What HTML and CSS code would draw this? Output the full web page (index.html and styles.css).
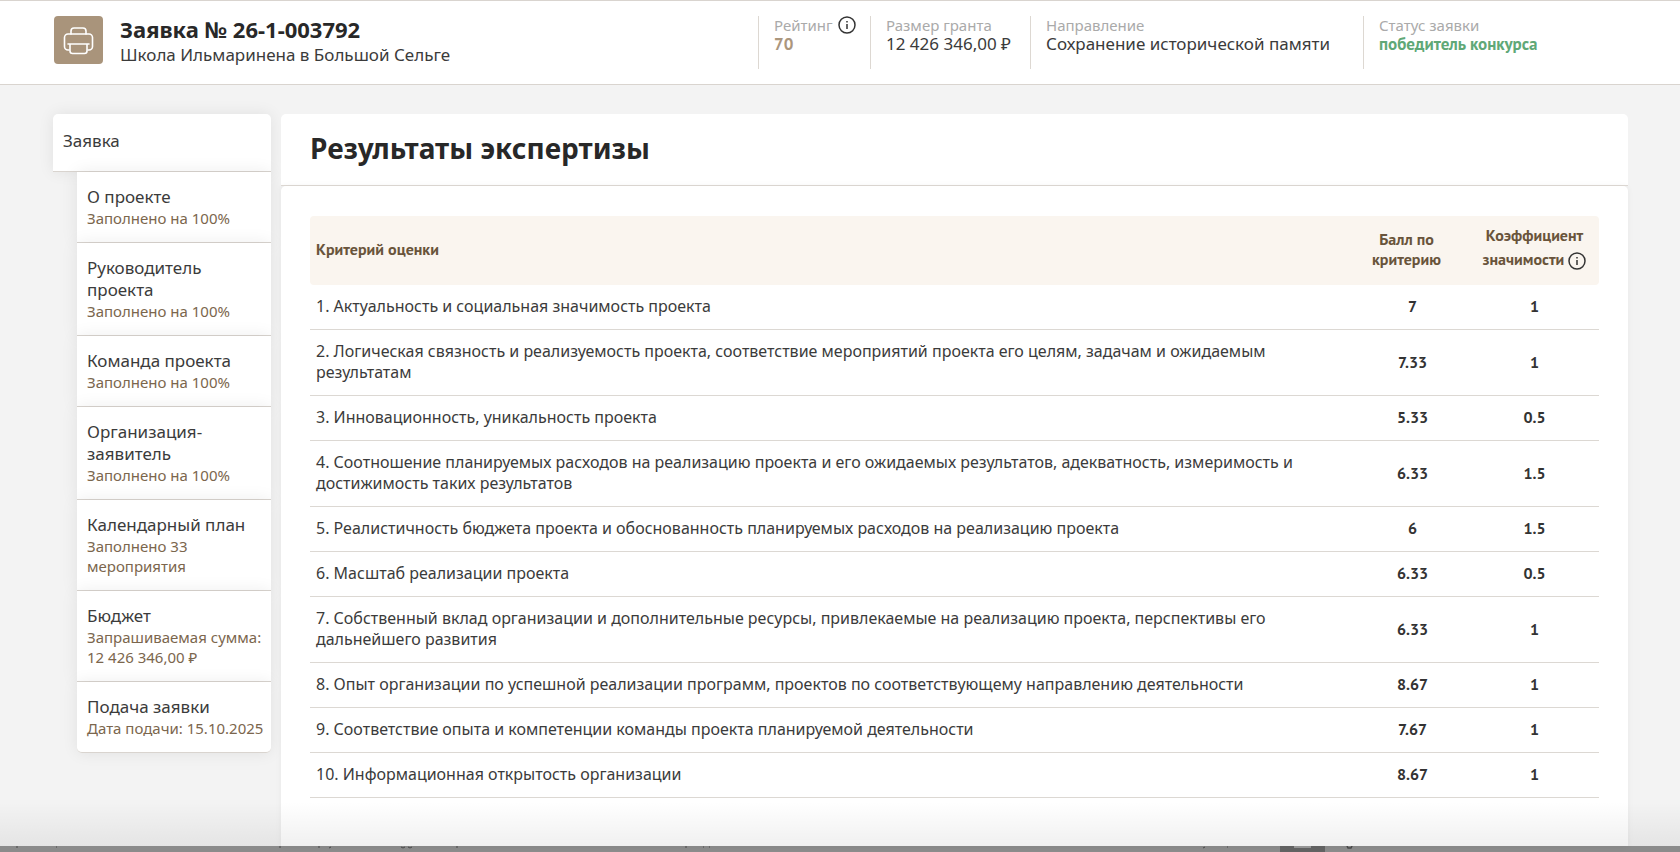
FILE: index.html
```html
<!DOCTYPE html>
<html lang="ru">
<head>
  <meta charset="UTF-8">
  <meta name="viewport" content="width=device-width, initial-scale=1.0">
  <title>Заявка № 26-1-003792</title>
  <link rel="stylesheet" href="styles.css">
</head>
<body>
  <!-- Шапка заявки -->
  <header class="header">
    <button class="print-button" type="button" aria-label="Печать">
      <svg width="49" height="49" viewBox="0 0 49 49" fill="none" stroke="#fff" stroke-width="1.6" stroke-linejoin="round" stroke-linecap="round">
        <path d="M17 18v-3a3 3 0 0 1 3-3h9a3 3 0 0 1 3 3v3"/>
        <path d="M15 34h-1a3.500 3.500 0 0 1-3.500-3.500v-9a3.500 3.500 0 0 1 3.500-3.500h21a3.500 3.500 0 0 1 3.500 3.500v9a3.500 3.500 0 0 1-3.500 3.500h-1"/>
        <path d="M14 28h21M16 28v7a2.500 2.500 0 0 0 2.500 2.500h12a2.500 2.500 0 0 0 2.500-2.500v-7"/>
      </svg>
    </button>
    <div class="header-title">
      <div class="header-number">Заявка № 26-1-003792</div>
      <div class="header-name">Школа Ильмаринена в Большой Сельге</div>
    </div>
    <dl class="stats">
      <div class="stat stat-rating">
        <dt>Рейтинг
          <svg class="info" viewBox="0 0 18 18"><circle cx="9" cy="9" r="8"/><path d="M9 5v1.600M9 8v5"/></svg>
        </dt>
        <dd class="rating">70</dd>
      </div>
      <div class="stat stat-grant">
        <dt>Размер гранта</dt>
        <dd>12 426 346,00 ₽</dd>
      </div>
      <div class="stat stat-direction">
        <dt>Направление</dt>
        <dd>Сохранение исторической памяти</dd>
      </div>
      <div class="stat stat-status">
        <dt>Статус заявки</dt>
        <dd class="status">победитель конкурса</dd>
      </div>
    </dl>
  </header>

  <div class="page">
    <!-- Меню разделов -->
    <nav class="menu">
      <a class="menu-main" href="#">Заявка</a>
      <a class="menu-item" href="#">О проекте<span>Заполнено на 100%</span></a>
      <a class="menu-item" href="#">Руководитель проекта<span>Заполнено на 100%</span></a>
      <a class="menu-item" href="#">Команда проекта<span>Заполнено на 100%</span></a>
      <a class="menu-item" href="#">Организация-заявитель<span>Заполнено на 100%</span></a>
      <a class="menu-item" href="#">Календарный план<span>Заполнено 33 мероприятия</span></a>
      <a class="menu-item" href="#">Бюджет<span>Запрашиваемая сумма:<br>12 426 346,00 ₽</span></a>
      <a class="menu-item" href="#">Подача заявки<span>Дата подачи: 15.10.2025</span></a>
    </nav>

    <!-- Результаты -->
    <main class="content">
      <h1>Результаты экспертизы</h1>
      <div class="panel">
        <table class="results">
          <thead>
            <tr>
              <th>Критерий оценки</th>
              <th class="score">Балл по критерию</th>
              <th class="weight">Коэффициент <span>значимости
                <svg class="info" viewBox="0 0 18 18"><circle cx="9" cy="9" r="8"/><path d="M9 5v1.600M9 8v5"/></svg></span>
              </th>
            </tr>
          </thead>
          <tbody>
            <tr><td>1. Актуальность и социальная значимость проекта</td><td>7</td><td>1</td></tr>
            <tr><td>2. Логическая связность и реализуемость проекта, соответствие мероприятий проекта его целям, задачам и ожидаемым результатам</td><td>7.33</td><td>1</td></tr>
            <tr><td>3. Инновационность, уникальность проекта</td><td>5.33</td><td>0.5</td></tr>
            <tr><td>4. Соотношение планируемых расходов на реализацию проекта и его ожидаемых результатов, адекватность, измеримость и достижимость таких результатов</td><td>6.33</td><td>1.5</td></tr>
            <tr><td>5. Реалистичность бюджета проекта и обоснованность планируемых расходов на реализацию проекта</td><td>6</td><td>1.5</td></tr>
            <tr><td>6. Масштаб реализации проекта</td><td>6.33</td><td>0.5</td></tr>
            <tr><td>7. Собственный вклад организации и дополнительные ресурсы, привлекаемые на реализацию проекта, перспективы его дальнейшего развития</td><td>6.33</td><td>1</td></tr>
            <tr><td>8. Опыт организации по успешной реализации программ, проектов по соответствующему направлению деятельности</td><td>8.67</td><td>1</td></tr>
            <tr><td>9. Соответствие опыта и компетенции команды проекта планируемой деятельности</td><td>7.67</td><td>1</td></tr>
            <tr><td>10. Информационная открытость организации</td><td>8.67</td><td>1</td></tr>
          </tbody>
        </table>
      </div>
    </main>
  </div>

  <!-- Край затемнённого фона под окном -->
  <div class="backdrop">
    <svg width="100%" height="6" viewBox="0 0 1680 6" preserveAspectRatio="none">
      <path fill="#636363" d="M1280 0h45v6h-45z"/>
      <path fill="#999" d="M1294 0h17v2h-17z"/>
      <path fill="none" stroke="#4a4a4a" d="M16 1h2M56 1h1M279 1h2M318 1h2M329 2l2-1M401 1l2 1 2-1M408 1l2 1 2-1M456 1h2M685 1h2M703 1h1M709 1h1M1203 2l2-1M1227 1h1"/>
      <path fill="none" stroke="#4a4a4a" stroke-width="1.500" d="M1347 0l1 2h3l1-2"/>
    </svg>
  </div>
</body>
</html>
```
FILE: styles.css
```css
* {
  box-sizing: border-box;
}

body {
  margin: 0;
  height: 100vh;
  display: flex;
  flex-direction: column;
  overflow: hidden;
  background: #f3f3f3;
  color: #3b3b3b;
  font-family: "Noto Sans", sans-serif;
}

a {
  color: inherit;
  text-decoration: none;
}

.info {
  width: 18px;
  height: 18px;
  fill: none;
  stroke: #333;
  stroke-width: 1.5;
  vertical-align: middle;
}

/* Шапка */
.header {
  display: flex;
  align-items: flex-start;
  flex-shrink: 0;
  height: 85px;
  padding: 15px 54px 0;
  background: #fff;
  border-top: 1px solid #d9d4cf;
  border-bottom: 1px solid #d9d4cf;
}

.print-button {
  width: 49px;
  height: 48px;
  display: flex;
  align-items: center;
  justify-content: center;
  padding: 0;
  border: none;
  border-radius: 4px;
  background: #a9947b;
  cursor: pointer;
}

.header-title {
  margin-left: 17px;
}

.header-number {
  font-size: 22px;
  font-weight: 700;
  line-height: 26px;
  color: #282828;
}

.header-name {
  font-size: 17px;
  line-height: 26px;
}

.stats {
  display: flex;
  margin: 0 0 0 auto;
}

.stat {
  height: 53px;
  padding-left: 15px;
  border-left: 1px solid #ddd8d2;
  white-space: nowrap;
}

.stat dt {
  display: flex;
  align-items: center;
  gap: 5px;
  height: 18px;
  font-size: 15px;
  line-height: 18px;
  color: #aaa;
}

.stat dd {
  margin: 0;
  font-size: 17px;
  line-height: 20px;
}

.stat-rating {
  width: 112px;
}

.stat-grant {
  width: 160px;
}

.stat-direction {
  width: 333px;
}

.stat-status {
  width: 263px;
}

.stat .rating,
.stat .status {
  font-family: "PT Sans", Lato, sans-serif;
  font-weight: 700;
}

.stat .rating {
  color: #ab967d;
}

.stat .status {
  color: #60a877;
}

/* Основная часть */
.page {
  position: relative;
  flex: 1;
  display: flex;
  gap: 10px;
  min-height: 0;
  padding: 29px 52px 0 53px;
}

.page::after {
  content: "";
  position: absolute;
  left: 0;
  right: 0;
  bottom: 0;
  height: 44px;
  background: linear-gradient(rgba(0, 0, 0, 0), rgba(0, 0, 0, 0.06));
  pointer-events: none;
}

.menu {
  flex: 0 0 218px;
  display: flex;
  flex-direction: column;
  align-items: flex-end;
  font-size: 17px;
  line-height: 22px;
}

.menu-main,
.menu-item {
  background: #fff;
  border-bottom: 1px solid #d9d4cf;
  box-shadow: 0 0 16px rgba(0, 0, 0, 0.08);
}

.menu-main {
  width: 100%;
  padding: 16px 10px 19px;
  border-radius: 5px 5px 0 0;
}

.menu-item {
  width: 194px;
  padding: 14px 6px 14px 10px;
}

.menu-item:last-child {
  border-radius: 0 0 5px 5px;
}

.menu-item span {
  display: block;
  font-size: 15px;
  line-height: 20px;
  color: #7b664d;
}

.content {
  flex: 1;
  display: flex;
  flex-direction: column;
}

h1 {
  margin: 0;
  padding: 14px 29px 17px;
  background: #fff;
  border-bottom: 1px solid #dfdad5;
  border-radius: 5px 5px 0 0;
  font-size: 28px;
  line-height: 40px;
  color: #282828;
}

.panel {
  flex: 1;
  padding: 30px 29px 0;
  background: #fff;
  border-radius: 5px 5px 0 0;
  box-shadow: 0 0 6px rgba(0, 0, 0, 0.05);
}

.results {
  width: 100%;
  border-collapse: separate;
  border-spacing: 0;
}

.results th {
  height: 69px;
  padding: 0 6px 3px;
  background: #faf5ef;
  color: #69543b;
  font-family: "PT Sans", Lato, sans-serif;
  font-size: 16px;
  line-height: 20px;
  text-align: left;
}

.results th:first-child {
  border-radius: 4px 0 0 4px;
}

.results th:last-child {
  border-radius: 0 4px 4px 0;
}

.results .score {
  width: 115px;
  padding: 0 26px 3px 14px;
  text-align: center;
}

.results .weight {
  width: 129px;
  text-align: center;
}

.weight span {
  display: block;
  line-height: 28px;
}

.results td {
  padding: 11px 6px 12px;
  border-bottom: 1px solid #dcd8d3;
  font-size: 16px;
  line-height: 21px;
}

.results td + td {
  font-family: "PT Sans", Lato, sans-serif;
  font-weight: 700;
  text-align: center;
  color: #333;
}

/* Нижняя полоса */
.backdrop {
  flex: 0 0 6px;
  background: #8b8b8b;
}

.backdrop svg {
  display: block;
}
```
